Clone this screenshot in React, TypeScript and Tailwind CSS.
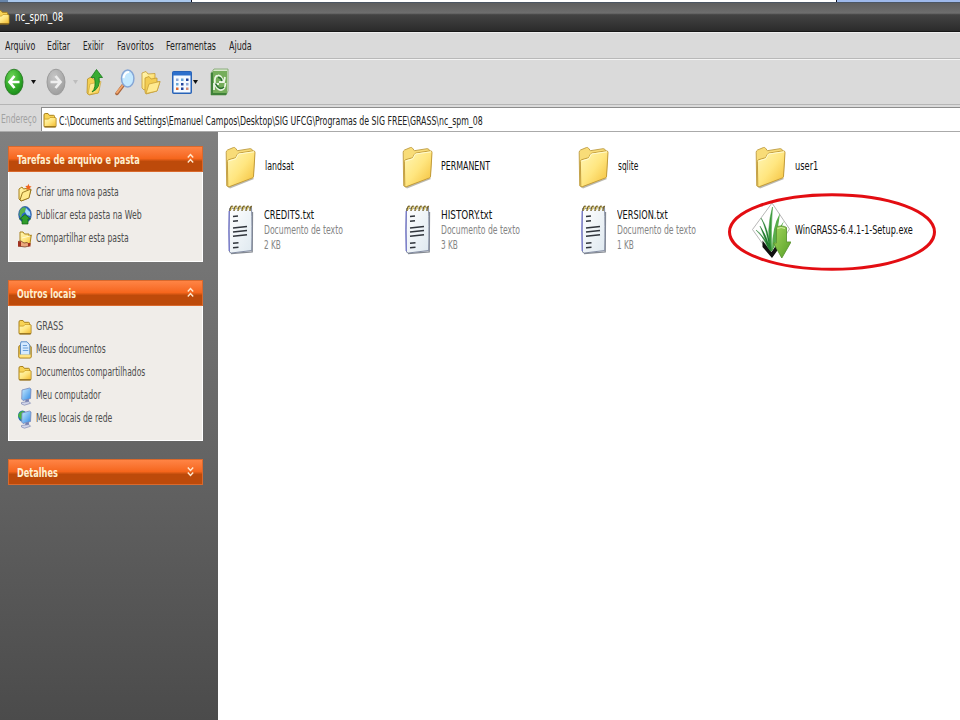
import { useLayoutEffect, useRef, useState } from "react";
import type { ReactNode } from "react";

/* A single line of text squeezed horizontally to a given width. */
function Fit({ w, children, className = "" }: { w: number; children: string; className?: string }) {
  const ref = useRef<HTMLSpanElement>(null);
  const [scale, setScale] = useState(0.85);
  useLayoutEffect(() => {
    if (ref.current) setScale(w / ref.current.offsetWidth);
  }, [w, children]);
  return (
    <span className={"block h-[15px] shrink-0 leading-[15px] " + className} style={{ width: w }}>
      <span ref={ref} className="inline-block origin-left whitespace-nowrap" style={{ transform: `scaleX(${scale})` }}>
        {children}
      </span>
    </span>
  );
}

function Defs() {
  return (
    <svg className="absolute size-0">
      <defs>
        <linearGradient id="fold" x1="0" y1="0" x2="1" y2="1">
          <stop offset="0" stopColor="#fff7b8" />
          <stop offset=".5" stopColor="#ffe680" />
          <stop offset="1" stopColor="#f3bd35" />
        </linearGradient>
        <linearGradient id="paper" x1="0" y1="0" x2="1" y2="1">
          <stop offset="0" stopColor="#ffffff" />
          <stop offset="1" stopColor="#dfe9f0" />
        </linearGradient>
        <radialGradient id="green" cx=".4" cy=".3" r=".75">
          <stop offset="0" stopColor="#6fd658" />
          <stop offset=".55" stopColor="#36ad2c" />
          <stop offset="1" stopColor="#178a18" />
        </radialGradient>
        <radialGradient id="gray" cx=".4" cy=".3" r=".75">
          <stop offset="0" stopColor="#c6c6c6" />
          <stop offset="1" stopColor="#9c9c9c" />
        </radialGradient>
        <linearGradient id="screen" x1="0" y1="0" x2="1" y2="1">
          <stop offset="0" stopColor="#c9ecff" />
          <stop offset="1" stopColor="#2f8ae6" />
        </linearGradient>
        <linearGradient id="arrow" x1="0" y1="0" x2="1" y2="1">
          <stop offset="0" stopColor="#a4d65c" />
          <stop offset="1" stopColor="#559f26" />
        </linearGradient>
      </defs>
    </svg>
  );
}

function SmallFolder() {
  return (
    <svg className="h-4 w-3.5 shrink-0" viewBox="0 0 14 16">
      <path d="M1 14V3Q1 1.5 2.2 1.5H5L6.3 3.3H10.500Q11.500 3.3 11.500 4.4V6H13V14Q13 15 12 15H2Q1 15 1 14Z" fill="#f8d355" stroke="#a9811c" />
      <path d="M1.800 14V7.500H5.500L7 6H12.500V14Z" fill="url(#fold)" />
      <path d="M1.500 7H5.500L7 5.500H12.500" stroke="#c59b2c" strokeWidth=".7" fill="none" />
      <path d="M1.500 14.800H12.800" stroke="#87631a" />
    </svg>
  );
}

function NewFolder() {
  return (
    <svg className="h-[19px] w-3.5 shrink-0" viewBox="0 0 14 19">
      <path d="M1 16V6L4 4 5.5 6 10 5V8L13 7 10.5 15 3 18Z" fill="url(#fold)" stroke="#a9811c" />
      <path d="M2 17 4.5 9.5 13 6 11 15 3 18Z" fill="#ffe98b" stroke="#8f6d18" strokeWidth=".9" />
      <path d="M10.5.8 11.3 3 13.6 3.5 11.8 5 12 7.3 10.3 6 8.3 7 8.8 4.7 7.3 3 9.6 2.8Z" fill="#f0641e" />
    </svg>
  );
}

function Globe() {
  return (
    <svg className="h-[19px] w-3.5 shrink-0" viewBox="0 0 14 19">
      <ellipse cx="7" cy="8.500" rx="6.300" ry="8" fill="#2868c8" stroke="#1b4f8d" strokeWidth=".7" />
      <path d="M2 4Q5 0 8 2L7 6 4 8 3 12 1.300 9Z" fill="#59b34a" />
      <path d="M8 2 12 6 12.500 10 9 9 7 6Z" fill="#a6daf8" />
      <path d="M7 8.500 12.500 13H10V18H4V13H1.500Z" fill="#2f9d2b" stroke="#126015" strokeWidth=".7" />
    </svg>
  );
}

function SharedFolder() {
  return (
    <svg className="h-[18px] w-3.5 shrink-0" viewBox="0 0 14 18">
      <path d="M2 14V2H5L6.500 4H11V6L13.300 5 11.800 15Z" fill="url(#fold)" stroke="#a9811c" />
      <path d="M4 8 12 6" stroke="#fffbd2" />
      <path d="M0 11.500 3 11 6 13 9 12.500 11 14V16L7 17 0 16Z" fill="#eba77c" stroke="#6c321d" strokeWidth=".7" />
      <path d="M0 11.500H3V16.500H0ZM10 13H12.500V16.500H10Z" fill="#a23120" />
    </svg>
  );
}

function MyDocuments() {
  return (
    <svg className="h-[18px] w-3.5 shrink-0" viewBox="0 0 14 18">
      <path d="M.8 16V6Q.8 4.500 2 4.500H12L13.2 6V16Q13 17 12 17H2Q1 17 .8 16Z" fill="#f3c84b" stroke="#a27a18" />
      <path d="M3 .8H9L11.800 4V14H2.500V3Z" fill="#d5eaff" stroke="#4f86c5" strokeWidth=".9" />
      <path d="M4.800 4.500H9M4.800 7H10.300M4.800 9.500H10.300" stroke="#6aa0da" />
      <path d="M1.500 13.500H12.500V16.400H1.500Z" fill="#ffe384" />
    </svg>
  );
}

function Computer({ globe = false }: { globe?: boolean }) {
  return (
    <svg className="h-[19px] w-3.5 shrink-0" viewBox="0 0 14 19">
      {globe && <ellipse cx="4.500" cy="6" rx="4.500" ry="5.500" fill="#236bb8" />}
      {globe && <path d="M0 6Q1 1 6 1L5 5 6 9 4 11Z" fill="#49b343" />}
      <path d="M4 3 11.500 1 13 2 12.500 11.500 5 13.500 3.700 12Z" fill="url(#screen)" stroke="#7686ba" strokeWidth=".8" />
      <path d="M7.500 13 10.800 12 11 15.500 7 16Z" fill="#747eb0" />
      <path d="M3.500 15.500 11 14.500 12.500 16.300 6.500 18.200 3.500 17Z" fill="#d2d6ea" stroke="#7e88b1" strokeWidth=".7" />
    </svg>
  );
}

function BigFolder() {
  return (
    <svg className="h-[43px] w-8 shrink-0" viewBox="0 0 32 43">
      <path d="M3 41 28 32 29 33 5 42.500Z" fill="#aaa79c" opacity=".8" />
      <path d="M1.200 6.300Q1.200 4.800 2.500 4L8.500 1.500Q9.800 1.200 10.500 2.200L12.400 4.700 25 2.700Q27 2.500 27.500 4.500L29.500 7 28.300 31 3.300 40.800 1.700 39.800Z" fill="#f8dc78" stroke="#bd9b40" strokeWidth=".9" />
      <path d="M2.400 15.500Q2.500 14 3.700 13.700L9.500 12Q10.700 11.700 11.200 10.700L12.400 8.300Q13 7.300 14.200 7L28.300 4.800Q30 4.700 30 6.500L28.500 30.500Q28.400 31.600 27.300 32L4.300 40.700Q3 41 2.800 39.600Z" fill="url(#fold)" stroke="#bd9636" strokeWidth=".9" />
      <path d="M3.400 15 10.700 12.900 13.400 8 29 5.800" fill="none" stroke="#fffbd0" />
    </svg>
  );
}

function Notepad() {
  return (
    <svg className="h-[51px] w-8 shrink-0" viewBox="0 0 32 51">
      <path d="M6 49.700 27.200 47.800 27.500 8" fill="none" stroke="#858a92" strokeWidth="1.300" />
      <path d="M4.500 4.500 26.500 3.500Q27.300 20 26.700 46.500L6.500 49Q4.400 49 4.300 47Q3.600 25 4.500 4.500Z" fill="url(#paper)" stroke="#77819a" strokeWidth=".9" />
      <path d="M4.200 7Q3.600 28 4.300 47" stroke="#7476cf" strokeWidth="1.200" fill="none" />
      <path d="M5 7Q5.500 1 8 2.500M9 7Q9.500 1 12 2.500M13 7Q13.500 1 16 2.500M17 7Q17.500 1 20 2.500M21 7Q21.500 1 24 2.500M25 7Q25 2 27 2.500" fill="none" stroke="#75642e" strokeWidth="1.400" />
      <path d="M6 6Q6.500 2 8.500 3M10 6Q10.500 2 12.500 3M14 6Q14.500 2 16.500 3M18 6Q18.500 2 20.500 3M22 6Q22.500 2 24.500 3" fill="none" stroke="#e0cb65" />
      <path d="M8 12.500 13 12M8 17.300 13 16.800M8 24 22 22.500M8 28 22 26.500M8 32.200 22 30.700M8 39.300 13.500 38.800M8 43.700 13.500 43.200" stroke="#30353c" strokeWidth="1.500" />
    </svg>
  );
}

function GrassIcon() {
  return (
    <svg className="-mt-[2px] h-[57px] w-10 shrink-0" viewBox="0 0 40 57">
      <path d="M21 1 38.500 27 21 55 1.500 27.500Z" fill="#fff" stroke="#a5a5a5" strokeWidth=".8" />
      <path d="M11.500 38.500 20.500 50 26 42V49L21 56 11.500 45Z" fill="#111" />
      <path d="M19.500 49Q15 28 21.500 5Q19.500 28 21 49Z" fill="#3a9a3b" stroke="#3a9a3b" strokeWidth=".5" />
      <path d="M18.500 47Q15 25 10 16Q17 25 20 48ZM17 46Q12 34 5 28Q13 33 19.500 49ZM16 42 9 24Q16 34 19 47Z" fill="#1d7b2c" stroke="#2b8436" strokeWidth=".4" />
      <path d="M21 48Q21 25 29 11Q27 28 22 48ZM21 46Q25 29 33 19Q27 32 23 46Z" fill="#58ad4b" />
      <path d="M25.500 25.500Q26 24 30 24T35.500 25.500V40H40L30.800 56 22.500 41H25.500Z" fill="url(#arrow)" stroke="#5c9532" strokeWidth=".9" />
      <path d="M26.500 26.500Q30 24.500 34 26.500" stroke="#d1eea2" fill="none" />
    </svg>
  );
}

function Nav({ forward = false }: { forward?: boolean }) {
  return (
    <svg className="h-7 w-5 shrink-0" viewBox="0 0 20 28">
      <ellipse cx="10" cy="14" rx="9" ry="12.800" fill={forward ? "url(#gray)" : "url(#green)"} stroke={forward ? "#969696" : "#287b24"} strokeWidth=".9" />
      <path d={forward ? "M4.500 14H14M9.500 8 14.500 14 9.500 20" : "M15.500 14H6M10.500 8 5.500 14 10.500 20"} fill="none" stroke={forward ? "#eeeeee" : "#fff"} strokeWidth="2.700" />
    </svg>
  );
}

function Caret({ dim = false }: { dim?: boolean }) {
  return (
    <svg className="h-1 w-[5px] shrink-0" viewBox="0 0 5 4">
      <path d="M0 0H5L2.500 4Z" fill={dim ? "#bdbdbd" : "#111"} />
    </svg>
  );
}

function Toolbar() {
  return (
    <div className="flex h-[45px] items-center border-t border-white/70 pl-[4px]">
      <Nav />
      <span className="ml-[7px]"><Caret /></span>
      <span className="ml-[10px] flex"><Nav forward /></span>
      <span className="ml-[7px]"><Caret dim /></span>
      <svg className="ml-[8px] h-7 w-[18px]" viewBox="0 0 18 28">
        <path d="M1.500 11 5 9 7 11 13 10V22L12 25 3 27 1 25Z" fill="#f4cf51" stroke="#ad861d" strokeWidth=".7" />
        <path d="M2 26.500 4 16 15 13.500 12.500 25Z" fill="url(#fold)" stroke="#c49c35" strokeWidth=".6" />
        <path d="M6 24Q10.500 20 8.500 9.500H5L10.500 1.500 16.500 9.500H13Q15 20 6 24Z" fill="#38ac31" stroke="#187a1b" strokeWidth=".8" />
      </svg>
      <svg className="ml-[11px] h-[27px] w-5" viewBox="0 0 20 27">
        <path d="M2 24.500 8 16.500" stroke="#a9643b" strokeWidth="3.500" strokeLinecap="round" />
        <path d="M2 23.700 8 16" stroke="#f2a66c" strokeWidth="1.900" strokeLinecap="round" />
        <ellipse cx="12.700" cy="9.500" rx="6.200" ry="8.500" fill="#c4e9ff" stroke="#86a6d5" strokeWidth="1.500" />
        <path d="M8.500 9Q9.500 3 14 3" stroke="#fff" strokeWidth="2" fill="none" />
      </svg>
      <svg className="ml-[6px] h-[25px] w-5" viewBox="0 0 20 25">
        <path d="M1 18V3L5 1.500 7 4 14 3.500V15L3 20Z" fill="url(#fold)" stroke="#c39b35" strokeWidth=".8" />
        <path d="M4 22V8L8 6.500 10 9 16 8V12L19 11.500 16 21 5 24Z" fill="#f3cd53" stroke="#c39b35" strokeWidth=".8" />
        <path d="M5 23.500 8 14 19 11.500 16 21Z" fill="#ffea91" stroke="#c39b35" strokeWidth=".7" />
      </svg>
      <svg className="ml-[11px] h-[23px] w-5" viewBox="0 0 20 23">
        <rect x=".75" y=".75" width="18.500" height="21.500" rx="1" fill="#f5faff" stroke="#2863b8" strokeWidth="1.500" />
        <path d="M1 1H19V4.500H1Z" fill="#2d70cc" />
        <path d="M4 7.500H6.500V10H4ZM14 12H16.500V14.500H14Z" fill="#8da8d9" />
        <path d="M9 7.500H11.500V10H9ZM4 12H6.500V14.500H4Z" fill="#6aa7d8" />
        <path d="M14 7.500H16.500V10H14ZM9 12H11.500V14.500H9ZM9 16.500H11.500V19H9Z" fill="#25469d" />
        <path d="M4 16.500H6.500V19H4Z" fill="#e26b30" /><path d="M14 16.500H16.500V19H14Z" fill="#d58d74" />
      </svg>
      <span className="ml-[1px]"><Caret /></span>
      <svg className="ml-[12px] h-7 w-[19px]" viewBox="0 0 19 28">
        <path d="M4 1H18V23L16 27H1V5Z" fill="#d8e8cc" stroke="#78a267" strokeWidth=".8" />
        <path d="M1 5 3 4V25H17L16 27H1Z" fill="#3f8139" />
        <path d="M3 3H17V25H3Z" fill="#75ae5b" />
        <path d="M5 15Q4 8 8 7.500 11 7 13 13M15 9 14 14H9M15.500 15Q15 22 11 22 7 22 5 16M4 22V16H9" fill="none" stroke="#eaf5e3" strokeWidth="1.800" />
        <path d="M5.500 15.500Q9 23 14 19M8 9.500Q11 9 12 13" fill="none" stroke="#2b7030" strokeWidth="1.600" />
      </svg>
    </div>
  );
}

function Panel({ title, w, open = true, children }: { title: string; w: number; open?: boolean; children?: ReactNode }) {
  return (
    <section className="w-[195px]">
      <header className="flex h-[26px] items-center justify-between border border-[#d9692d] bg-linear-to-b from-[#ff8444] from-0% via-[#f5661c] via-48% to-[#bd4a0a] to-60% pt-[3px] pl-2 pr-2">
        <Fit w={w} className="font-bold text-[#ffefd0]">{title}</Fit>
        <svg className="mb-1 h-[11px] w-[7px]" viewBox="0 0 7 11">
          <path d={open ? "M.8 4.500 3.500 1.500 6.200 4.500M.8 9.500 3.500 6.500 6.200 9.500" : "M.8 1.500 3.500 4.500 6.200 1.500M.8 6.500 3.500 9.500 6.200 6.500"} fill="none" stroke="#ffe9d0" strokeWidth="1.400" />
        </svg>
      </header>
      {open && <div className="border border-t-0 border-white bg-[#f0ede9] pt-[9px] pl-[9px] text-[#4e4e4e]">{children}</div>}
    </section>
  );
}

function Task({ icon, w, children }: { icon: ReactNode; w: number; children: string }) {
  return (
    <div className="flex h-[23.2px] items-center gap-[4px]">
      {icon}
      <Fit w={w} className="mb-px">{children}</Fit>
    </div>
  );
}

function TextFile({ name, w, size, sizeW }: { name: string; w: number; size: string; sizeW: number }) {
  return (
    <div className="flex w-[176.700px] gap-[7px]">
      <Notepad />
      <div className="pt-[4px] text-[#858585]">
        <Fit w={w} className="text-[#111]">{name}</Fit>
        <Fit w={79}>Documento de texto</Fit>
        <Fit w={sizeW}>{size}</Fit>
      </div>
    </div>
  );
}

const menu: [string, number, string][] = [
  ["Arquivo", 30, "mr-[12px]"],
  ["Editar", 23, "mr-[13px]"],
  ["Exibir", 21, "mr-[13px]"],
  ["Favoritos", 37, "mr-[12px]"],
  ["Ferramentas", 50, "mr-[13px]"],
  ["Ajuda", 23, ""],
];

const folders: [string, number][] = [["landsat", 29], ["PERMANENT", 49], ["sqlite", 20], ["user1", 23]];

export default function App() {
  return (
    <div className="relative flex h-[720px] w-[960px] flex-col overflow-hidden bg-white font-['DejaVu_Sans_Condensed','DejaVu_Sans',sans-serif] text-[12px] text-[#222]">
      <Defs />
      <div className="flex h-[3px] shrink-0 border-b border-[#4c5663]">
        <div className="w-2 bg-[#6785aa]" />
        <div className="w-[184px] border-r border-[#112] bg-[#a9c7ec]" />
        <div className="w-[645px] border-r border-[#112] bg-white" />
        <div className="grow bg-[#9eb9eb]" />
      </div>
      <div className="h-[29px] shrink-0 overflow-hidden border-b border-[#171717] bg-linear-to-b from-[#5e5e5e] from-0% via-[#6e6e6e] via-36% to-[#454545] to-42%">
        <div className="flex h-full w-full items-center bg-linear-to-b from-transparent from-38% to-[#2b2b2b] to-100%">
          <span className="-ml-1 flex"><SmallFolder /></span>
          <Fit w={48} className="mt-px ml-[5px] text-white">nc_spm_08</Fit>
        </div>
      </div>
      <div className="flex h-[27px] shrink-0 items-center border-t border-b border-t-[#eeeeee] border-b-[#b8b8b8] bg-[#dadada] pt-px pl-[5px]">
        {menu.map(([t, w, m]) => <div key={t} className={m}><Fit w={w}>{t}</Fit></div>)}
      </div>
      <div className="h-[46px] shrink-0 border-b border-[#b5b5b5] bg-[#dadada]"><Toolbar /></div>
      <div className="flex h-[27px] shrink-0 items-stretch border-b border-[#aaaaaa] bg-[#dadada] pt-0.5">
        <div className="flex w-[41px] items-center pl-px text-[#a2a2a2]"><Fit w={36}>Endereço</Fit></div>
        <div className="flex grow items-center gap-[2px] border-l border-t border-[#8c8c8c] bg-white pl-px">
          <SmallFolder />
          <Fit w={424} className="mt-[3px]">{"C:\\Documents and Settings\\Emanuel Campos\\Desktop\\SIG UFCG\\Programas de SIG FREE\\GRASS\\nc_spm_08"}</Fit>
        </div>
      </div>
      <div className="flex min-h-0 grow">
        <aside className="flex w-[218px] shrink-0 flex-col gap-[18px] bg-linear-to-b from-[#808080] via-[#646464] via-55% to-[#4b4b4b] pt-[14px] pl-2">
          <Panel title="Tarefas de arquivo e pasta" w={123}>
            <div className="h-[80px]">
              <Task icon={<NewFolder />} w={83}>Criar uma nova pasta</Task>
              <Task icon={<Globe />} w={106}>Publicar esta pasta na Web</Task>
              <Task icon={<SharedFolder />} w={93}>Compartilhar esta pasta</Task>
            </div>
          </Panel>
          <Panel title="Outros locais" w={59}>
            <div className="h-[125px]">
              <Task icon={<SmallFolder />} w={27}>GRASS</Task>
              <Task icon={<MyDocuments />} w={70}>Meus documentos</Task>
              <Task icon={<SmallFolder />} w={109}>Documentos compartilhados</Task>
              <Task icon={<Computer />} w={65}>Meu computador</Task>
              <Task icon={<Computer globe />} w={76}>Meus locais de rede</Task>
            </div>
          </Panel>
          <Panel title="Detalhes" w={41} open={false} />
        </aside>
        <main className="grow bg-white pt-[14px] pl-[7px]">
          <div className="flex h-[58px]">
            {folders.map(([name, w]) => (
              <div key={name} className="flex w-[176.700px] gap-[7.500px]">
                <BigFolder />
                <Fit w={w} className="mt-[13px] text-[#111]">{name}</Fit>
              </div>
            ))}
          </div>
          <div className="flex">
            <TextFile name="CREDITS.txt" w={50} size="2 KB" sizeW={17} />
            <TextFile name="HISTORY.txt" w={51} size="3 KB" sizeW={17} />
            <TextFile name="VERSION.txt" w={51} size="1 KB" sizeW={17} />
            <div className="-ml-1 flex items-start gap-[4px]">
              <GrassIcon />
              <Fit w={118} className="mt-[19px] text-[#111]">WinGRASS-6.4.1-1-Setup.exe</Fit>
            </div>
          </div>
        </main>
      </div>
      <svg className="absolute top-[192px] left-[727px] h-20 w-[210px]" viewBox="0 0 210 80">
        <ellipse cx="105" cy="40" rx="102.500" ry="37.300" fill="none" stroke="#e30d12" strokeWidth="3" />
      </svg>
    </div>
  );
}
